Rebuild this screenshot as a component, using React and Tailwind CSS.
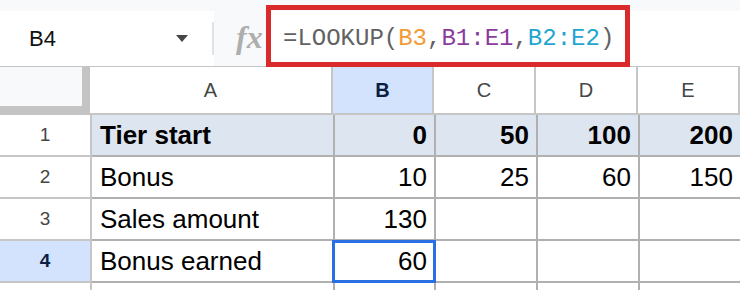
import React from "react";

const cols = [
  { key: "A", w: "w-[243px]" },
  { key: "B", w: "w-[101px]" },
  { key: "C", w: "w-[102px]" },
  { key: "D", w: "w-[102px]" },
  { key: "E", w: "w-[102px]" },
];

const rows = [
  { n: "1", band: true, bold: true, cells: ["Tier start", "0", "50", "100", "200"] },
  { n: "2", cells: ["Bonus", "10", "25", "60", "150"] },
  { n: "3", cells: ["Sales amount", "130", "", "", ""] },
  { n: "4", sel: true, cells: ["Bonus earned", "60", "", "", ""] },
  { n: "", cells: ["", "", "", "", ""] },
];

export default function App() {
  return (
    <div className="relative w-[740px] h-[290px] overflow-hidden bg-white font-['Liberation_Sans',Arial,sans-serif]">
      {/* top strip */}
      <div className="h-[11px] bg-[#f8f9fa]" />
      {/* formula bar */}
      <div className="flex h-[56px] border-b border-[#c4c4c4]">
        <div className="w-[212px] flex items-center bg-white">
          <span className="ml-[29px] text-[22px] text-[#111]">B4</span>
          <span className="ml-auto mr-[24px] w-0 h-0 border-l-[6px] border-r-[6px] border-t-[7px] border-l-transparent border-r-transparent border-t-[#444746]" />
        </div>
        <div className="w-[2px] my-[11px] bg-[#dde3ea]" />
        <div className="w-[52px] bg-[#f8f9fa] flex items-center pl-[22px]">
          <span className="font-['Liberation_Serif',serif] italic font-bold text-[32px] text-[#aeaeae] leading-none -mt-[4px]">fx</span>
        </div>
        <div className="flex-1 flex items-center pl-[17px] font-['Liberation_Mono',monospace] text-[24px] leading-none text-[#616161]">
          <span>=LOOKUP(</span>
          <span className="text-[#f29a34]">B3</span>
          <span>,</span>
          <span className="text-[#8a3c9e]">B1:E1</span>
          <span>,</span>
          <span className="text-[#1ea5d0]">B2:E2</span>
          <span>)</span>
        </div>
      </div>

      {/* column header row */}
      <div className="flex h-[48px]">
        <div className="w-[92px] h-full border-r-2 border-b-2 border-[#c4c4c4] bg-[#c4c4c4] flex flex-col">
          <div className="w-[82px] h-[39px] bg-[#f8f9fa]" />
        </div>
        {cols.map((c) => (
          <div
            key={c.key}
            className={`${c.w} shrink-0 h-full border-r-2 border-b-2 border-[#c6c6c6] flex items-center justify-center text-[20px] ${
              c.key === "B" ? "bg-[#d3e3fd] font-bold text-[#0b1f44]" : "bg-white text-[#444746]"
            }`}
          >
            {c.key}
          </div>
        ))}
      </div>

      {/* data rows */}
      {rows.map((r, ri) => (
        <div key={ri} className="flex h-[42px]">
          <div
            className={`w-[92px] shrink-0 h-full border-r-2 border-b-2 border-[#c6c6c6] flex items-center justify-center text-[19px] ${
              r.sel ? "bg-[#d3e3fd] font-bold text-[#0b1f44]" : "bg-white text-[#444746]"
            }`}
          >
            {r.n}
          </div>
          {cols.map((c, i) => (
            <div
              key={c.key}
              className={`${c.w} shrink-0 h-full border-r-2 border-b-2 border-[#b0b0b0] flex items-center text-[26px] text-black whitespace-nowrap ${
                i === 0 ? "justify-start pl-[8px]" : "justify-end pr-[7px]"
              } ${r.band ? "bg-[#dce5f0]" : "bg-white"} ${r.bold ? "font-bold" : ""}`}
            >
              {r.cells[i]}
            </div>
          ))}
        </div>
      ))}

      {/* selection overlay */}
      <div className="absolute left-[332px] top-[240px] w-[104px] h-[43px] border-[3px] border-[#2a6fe3]" />

      {/* annotation box */}
      <div className="absolute left-[266px] top-[5px] w-[364px] h-[62px] border-[5px] border-[#d92b2b]" />
    </div>
  );
}
